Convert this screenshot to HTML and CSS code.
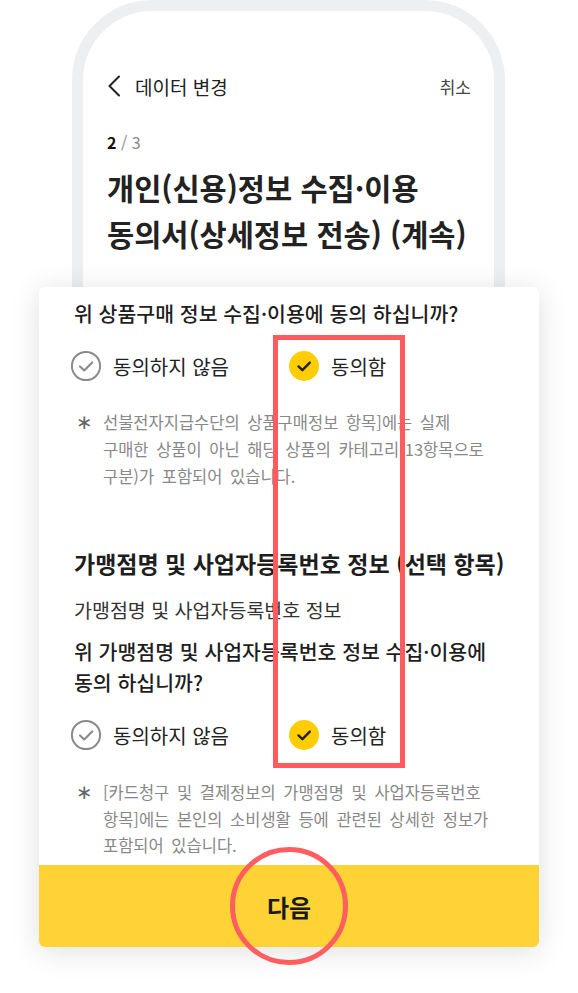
FILE: index.html
```html
<!DOCTYPE html>
<html lang="ko">
<head>
<meta charset="utf-8">
<title>데이터 변경</title>
<link rel="stylesheet" href="styles.css">
</head>
<body>
<div class="stage">
  <div class="phone">
    <div class="header">
      <div class="header-left">
        <svg class="chev" width="14" height="22" viewBox="0 0 14 22"><path d="M12 1.5 L2.5 11 L12 20.5" fill="none" stroke="#222" stroke-width="2" stroke-linecap="round" stroke-linejoin="round"/></svg>
        <span class="header-title">데이터 변경</span>
      </div>
      <span class="cancel">취소</span>
    </div>
    <div class="step"><b>2</b><span class="step-total"> / 3</span></div>
    <h1 class="title">개인(신용)정보 수집·이용<br>동의서(상세정보 전송) (계속)</h1>
  </div>

  <div class="card">
    <p class="question">위 상품구매 정보 수집·이용에 동의 하십니까?</p>
    <div class="options">
      <div class="option">
        <svg class="radio" width="32" height="32" viewBox="0 0 32 32"><circle cx="16" cy="16" r="14.1" fill="#fff" stroke="#8a8a8a" stroke-width="2"/><path d="M10 16.4 L14.2 20.4 L22.2 12.4" fill="none" stroke="#8a8a8a" stroke-width="2.1" stroke-linecap="round" stroke-linejoin="round"/></svg>
        <span>동의하지 않음</span>
      </div>
      <div class="option">
        <svg class="radio" width="32" height="32" viewBox="0 0 32 32"><circle cx="16" cy="16" r="15" fill="#ffcd00"/><path d="M10.5 16.4 L14.4 20.2 L21.8 12.6" fill="none" stroke="#222" stroke-width="2.4" stroke-linecap="round" stroke-linejoin="round"/></svg>
        <span>동의함</span>
      </div>
    </div>
    <div class="note note-first">
      <span class="ast">∗</span>
      <p>선불전자지급수단의 상품구매정보 항목]에는 실제<br>구매한 상품이 아닌 해당 상품의 카테고리(13항목으로<br>구분)가 포함되어 있습니다.</p>
    </div>

    <h2 class="section">가맹점명 및 사업자등록번호 정보 (선택 항목)</h2>
    <p class="sub">가맹점명 및 사업자등록번호 정보</p>
    <p class="question q2">위 가맹점명 및 사업자등록번호 정보 수집·이용에<br>동의 하십니까?</p>
    <div class="options options-2">
      <div class="option">
        <svg class="radio" width="32" height="32" viewBox="0 0 32 32"><circle cx="16" cy="16" r="14.1" fill="#fff" stroke="#8a8a8a" stroke-width="2"/><path d="M10 16.4 L14.2 20.4 L22.2 12.4" fill="none" stroke="#8a8a8a" stroke-width="2.1" stroke-linecap="round" stroke-linejoin="round"/></svg>
        <span>동의하지 않음</span>
      </div>
      <div class="option">
        <svg class="radio" width="32" height="32" viewBox="0 0 32 32"><circle cx="16" cy="16" r="15" fill="#ffcd00"/><path d="M10.5 16.4 L14.4 20.2 L21.8 12.6" fill="none" stroke="#222" stroke-width="2.4" stroke-linecap="round" stroke-linejoin="round"/></svg>
        <span>동의함</span>
      </div>
    </div>
    <div class="note note-second">
      <span class="ast">∗</span>
      <p>[카드청구 및 결제정보의 가맹점명 및 사업자등록번호<br>항목]에는 본인의 소비생활 등에 관련된 상세한 정보가<br>포함되어 있습니다.</p>
    </div>

    <div class="next">
      <span>다음</span>
      <div class="mark-circle"></div>
    </div>
    <div class="mark-rect"></div>
  </div>
</div>
</body>
</html>
```
FILE: styles.css
```css
* { box-sizing: border-box; }
html, body { margin: 0; padding: 0; background: #fff; }
body {
  font-family: "Noto Sans CJK KR", "Noto Sans", sans-serif;
  color: #222;
  width: 578px;
  height: 993px;
  overflow: hidden;
}
.stage { width: 578px; }

.phone {
  margin-left: 72px;
  width: 433px;
  height: 287px;
  border: 11px solid #eeeff1;
  border-bottom: none;
  border-radius: 80px 80px 0 0;
  padding: 53px 23px 0 24px;
}
.header {
  height: 44px;
  display: flex;
  align-items: center;
  justify-content: space-between;
}
.header-left { display: flex; align-items: center; gap: 14px; }
.chev { display: block; }
.header-title { font-size: 19px; color: #222; }
.cancel { font-size: 17px; color: #444; }

.step { margin-top: 23px; font-size: 16px; line-height: 22px; }
.step b { font-weight: 700; color: #111; }
.step-total { color: #888; }

.title {
  margin: 11px 0 0;
  font-size: 29.5px;
  line-height: 46px;
  font-weight: 700;
  color: #222;
  white-space: nowrap;
}

.card {
  position: relative;
  margin-left: 39px;
  width: 500px;
  height: 660px;
  background: #fff;
  border-radius: 6px;
  box-shadow: 0 4px 30px rgba(0,0,0,0.13);
  padding: 12px 0 0 35px;
}
.question {
  margin: 0;
  font-size: 20.5px;
  line-height: 28px;
  font-weight: 500;
  color: #1e1e1e;
}
.options {
  margin: 23px 0 0 -4px;
  display: grid;
  grid-template-columns: 218px auto;
  height: 32px;
}
.option { display: flex; align-items: center; gap: 11px; font-size: 20px; color: #222; }
.radio { display: block; flex: none; }

.note { display: flex; color: #888; font-size: 16.5px; line-height: 27px; word-spacing: 3px; }
.note p { margin: 0; white-space: nowrap; }
.note-first { margin-top: 27px; }
.ast { width: 29px; flex: none; padding-left: 2px; font-family: "DejaVu Sans", sans-serif; font-size: 20px; color: #666; line-height: 27px; }

.section {
  margin: 58px 0 0;
  font-size: 23px;
  line-height: 30px;
  font-weight: 700;
  color: #1e1e1e;
}
.sub { margin: 19px 0 0; font-size: 19.5px; line-height: 26px; color: #333; }
.q2 { margin-top: 13px; line-height: 31px; }
.options-2 { margin-top: 21px; }
.note-second { margin-top: 28px; line-height: 26.5px; }
.note-second .ast { line-height: 26.5px; }

.next {
  position: absolute;
  left: 0;
  bottom: 0;
  width: 500px;
  height: 82px;
  background: #ffd336;
  border-radius: 0 0 6px 6px;
  display: flex;
  align-items: center;
  justify-content: center;
  font-size: 24px;
  font-weight: 700;
  color: #1a1a1a;
}
.mark-circle {
  position: absolute;
  left: 191px;
  top: -18px;
  width: 118px;
  height: 118px;
  border: 5px solid #ff5e60;
  border-radius: 50%;
}
.mark-rect {
  position: absolute;
  left: 234px;
  top: 48px;
  width: 132px;
  height: 433px;
  border: 5px solid #ff5a5e;
}
```
